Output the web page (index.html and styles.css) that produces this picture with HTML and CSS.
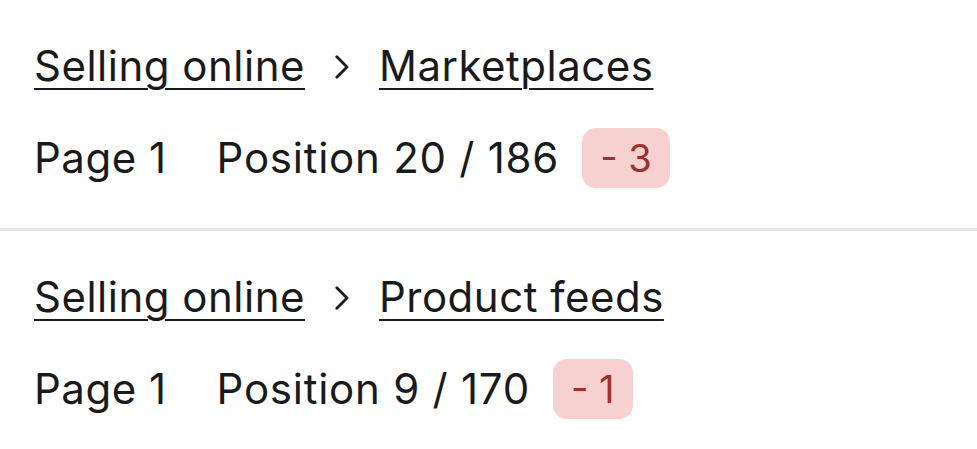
FILE: index.html
```html
<!DOCTYPE html>
<html>
<head>
<meta charset="utf-8">
<link rel="stylesheet" href="styles.css">
</head>
<body>
<ul class="list">
  <li class="item item-first">
    <div class="crumbs">
      <a class="crumb" href="#">Selling online</a>
      <svg class="chev" width="14" height="24" viewBox="0 0 14 24"><path d="M1.8 1.8 L12 12 L1.8 22.2" fill="none" stroke="#1c1c1e" stroke-width="2.8" stroke-linecap="round" stroke-linejoin="round"/></svg>
      <a class="crumb" href="#">Marketplaces</a>
    </div>
    <div class="stats">
      <span class="page">Page 1</span>
      <span class="pos">Position 20 / 186</span>
      <span class="badge">- 3</span>
    </div>
  </li>
  <li class="item">
    <div class="crumbs">
      <a class="crumb" href="#">Selling online</a>
      <svg class="chev" width="14" height="24" viewBox="0 0 14 24"><path d="M1.8 1.8 L12 12 L1.8 22.2" fill="none" stroke="#1c1c1e" stroke-width="2.8" stroke-linecap="round" stroke-linejoin="round"/></svg>
      <a class="crumb" href="#">Product feeds</a>
    </div>
    <div class="stats">
      <span class="page">Page 1</span>
      <span class="pos">Position 9 / 170</span>
      <span class="badge">- 1</span>
    </div>
  </li>
</ul>
</body>
</html>
```
FILE: styles.css
```css
html, body {
  margin: 0;
  padding: 0;
  background: #ffffff;
}
body {
  font-family: Inter, "Noto Sans", sans-serif;
  color: #1a1a1c;
  font-size: 42px;
}
.list {
  list-style: none;
  margin: 0;
  padding: 0;
}
.item {
  padding: 36px 34px 40px;
  display: flex;
  flex-direction: column;
  gap: 32px;
}
.item-first {
  border-bottom: 3px solid #e8e8e8;
}
.crumbs {
  display: flex;
  align-items: center;
  height: 60px;
  line-height: 60px;
}
.crumb {
  color: #1a1a1c;
  text-decoration: underline;
  text-decoration-thickness: 2px;
  text-underline-offset: 7px;
  letter-spacing: 0.5px;
}
.chev {
  margin: 0 30px 0 30px;
  position: relative;
  top: 1px;
}
.stats {
  display: flex;
  align-items: center;
  height: 60px;
  line-height: 60px;
  letter-spacing: 0.5px;
}
.page {
  margin-right: 50px;
}
.pos {
  letter-spacing: 0.75px;
}
.badge {
  margin-left: 23px;
  background: #f6d1cf;
  color: #a1302b;
  border-radius: 14px;
  height: 60px;
  line-height: 60px;
  padding: 0 18px;
  font-size: 38px;
  letter-spacing: 0;
}
```
